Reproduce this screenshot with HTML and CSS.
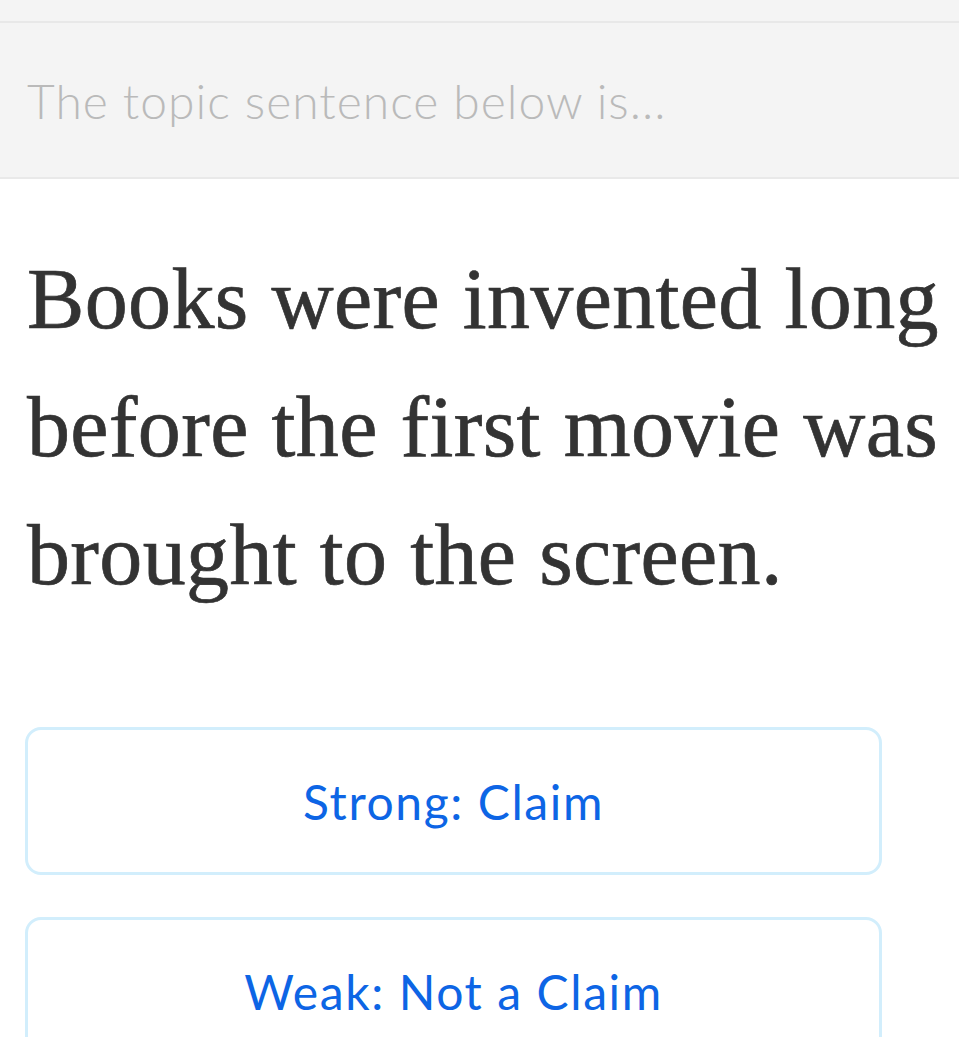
FILE: index.html
```html
<!DOCTYPE html>
<html>
<head>
<meta charset="utf-8">
<link rel="stylesheet" href="styles.css">
</head>
<body>
<div class="topband"></div>
<header class="prompt">
  <p class="prompt-text">The topic sentence below is...</p>
</header>
<main class="content">
  <h1 class="sentence">Books were invented long before the first movie was brought to the screen.</h1>
  <div class="options">
    <button class="option">Strong: Claim</button>
    <button class="option">Weak: Not a Claim</button>
  </div>
</main>
</body>
</html>
```
FILE: styles.css
```css
html, body {
  margin: 0;
  padding: 0;
  background: #ffffff;
  overflow: hidden;
}
body {
  width: 959px;
  height: 1037px;
}
.topband {
  height: 21px;
  background: #f4f4f4;
  border-bottom: 2px solid #e8e8e8;
}
.prompt {
  height: 154px;
  background: #f4f4f4;
  border-bottom: 2px solid #e9e9e9;
  display: flex;
  align-items: center;
  padding-left: 27px;
}
.prompt-text {
  margin: 0;
  font-family: Lato, "Noto Sans", sans-serif;
  font-weight: 300;
  font-size: 48px;
  letter-spacing: 1px;
  color: #bababa;
}
.content {
  padding: 0 0 0 27px;
}
.sentence {
  margin: 56px 0 0 0;
  font-family: "Liberation Serif", serif;
  font-weight: normal;
  font-size: 86px;
  line-height: 128px;
  letter-spacing: 0.35px;
  word-spacing: 1px;
  -webkit-text-stroke: 0.7px #333333;
  color: #333333;
  width: 925px;
}
.options {
  margin-top: 108px;
  margin-left: -2px;
  display: flex;
  flex-direction: column;
  gap: 42px;
}
.option {
  width: 857px;
  height: 148px;
  background: #ffffff;
  border: 3px solid #d2eefc;
  border-radius: 16px;
  font-family: Lato, "Noto Sans", sans-serif;
  font-size: 48px;
  letter-spacing: 1.6px;
  color: #0d65e5;
  padding: 0;
}
```
